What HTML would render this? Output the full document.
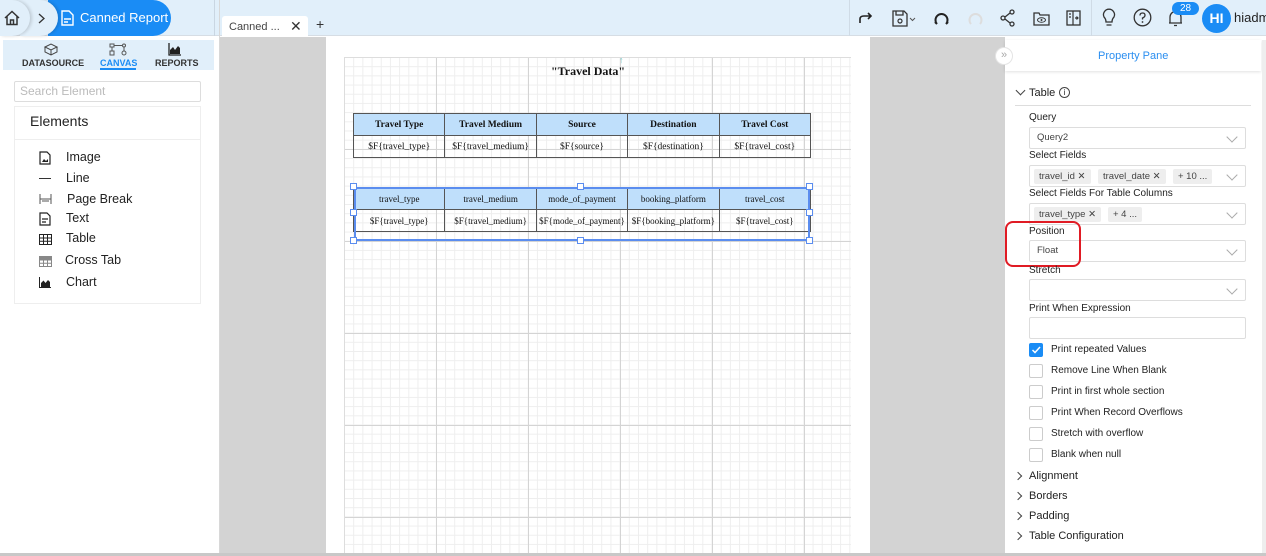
<!DOCTYPE html>
<html><head><meta charset="utf-8"><style>
*{margin:0;padding:0;box-sizing:border-box}
body{width:1266px;height:556px;overflow:hidden;background:#fff;font-family:"Liberation Sans",sans-serif;position:relative;color:#222}
.a{position:absolute}
.top{left:0;top:0;width:1266px;height:36px;background:#e1effa;border-bottom:1px solid #d6dde4}
svg{display:block}
.ser{font-family:"Liberation Serif",serif;font-size:9.5px;color:#111}
table{border-collapse:collapse;table-layout:fixed}
td{border:1px solid #555;text-align:center;height:22px;padding:0;overflow:hidden;white-space:nowrap}
tr.h td{background:#bfdffb}
.t1 tr.h td{font-weight:bold}
.t2 td{font-size:9px}
.lbl{font-size:10px;color:#222;left:1029px}
.box{left:1029px;width:217px;height:22px;border:1px solid #ddd;border-radius:2px;background:#fff}
.chev{position:absolute;right:9px;top:5px;width:8px;height:8px;border-right:1px solid #aaa;border-bottom:1px solid #aaa;transform:rotate(45deg)}
.chip{position:absolute;top:3px;height:15px;background:#eee;font-size:9.5px;color:#444;line-height:15px;padding:0 5px;border-radius:2px}
.cb{left:1029px;width:14px;height:14px;border:1px solid #ccc;border-radius:2px;background:#fff}
.cbl{left:1051px;font-size:10px;color:#222}
.sec{left:1029px;font-size:11px;color:#222}
.arr{position:absolute;left:1015px;width:6px;height:6px;border-right:1px solid #444;border-bottom:1px solid #444;transform:rotate(-45deg)}
.el{left:66px;font-size:12.5px;color:#222}
.ic{left:39px}
</style></head><body>
<div class="a top"></div>
<!-- breadcrumb -->
<div class="a" style="left:48px;top:0;width:123px;height:36px;background:#1a8cf5;border-radius:0 18px 18px 0;z-index:1"></div>
<div class="a" style="left:20px;top:0;width:38px;height:36px;background:#e1effa;border-radius:0 18px 18px 0;box-shadow:2px 0 3px rgba(0,0,0,.15);z-index:2"></div>
<div class="a" style="left:0;top:0;width:30px;height:36px;background:#e1effa;border-radius:0 18px 18px 0;box-shadow:2px 0 3px rgba(0,0,0,.15);z-index:3"></div>
<svg class="a" style="left:3px;top:9px;z-index:4" width="18" height="18" viewBox="0 0 18 18"><path d="M2 9 L9 2.5 L16 9 M4 7.5 V15.5 H14 V7.5 M7.5 15.5 V11 H10.5 V15.5" fill="none" stroke="#333" stroke-width="1.5"/></svg>
<svg class="a" style="left:38px;top:13px;z-index:4" width="8" height="11" viewBox="0 0 8 11"><path d="M1 1 L6 5.5 L1 10" fill="none" stroke="#333" stroke-width="1.3"/></svg>
<svg class="a" style="left:61px;top:10px;z-index:3" width="13" height="16" viewBox="0 0 13 16"><path d="M1 1 H8 L12 5 V15 H1 Z M3 9 H10 M3 12 H7" fill="none" stroke="#fff" stroke-width="1.4"/></svg>
<div class="a" style="left:80px;top:10px;font-size:13px;color:#fff;z-index:3">Canned Report</div>
<div class="a" style="left:214px;top:0;width:1px;height:36px;background:#c9d6e2"></div>
<div class="a" style="left:219px;top:0;width:1px;height:556px;background:#d8d8d8"></div>
<!-- tab -->
<div class="a" style="left:222px;top:16px;width:86px;height:20px;background:#fff;border-radius:3px 3px 0 0"></div>
<div class="a" style="left:229px;top:21px;font-size:11px;color:#444">Canned ...</div>
<div class="a" style="left:290px;top:18px;font-size:14px;color:#333">✕</div>
<div class="a" style="left:316px;top:16px;font-size:14px;color:#333">+</div>
<!-- toolbar -->
<div class="a" style="left:849px;top:0;width:1px;height:36px;background:#cfdbe6"></div>
<div class="a" style="left:1091px;top:0;width:1px;height:36px;background:#cfdbe6"></div>
<svg class="a" style="left:858px;top:10px" width="16" height="16" viewBox="0 0 16 16"><path d="M2 13 V9 Q2 6 6 6 H13 M10 3 L13 6 L10 9" fill="none" stroke="#222" stroke-width="1.6"/></svg>
<svg class="a" style="left:892px;top:10px" width="26" height="17" viewBox="0 0 26 17"><path d="M1 1 H12 L15 4 V16 H1 Z M4 1 V5 H11 V1" fill="none" stroke="#333" stroke-width="1.3"/><circle cx="8" cy="11" r="2" fill="none" stroke="#333" stroke-width="1.2"/><path d="M18 8 L20.5 10.5 L23 8" fill="none" stroke="#555"/></svg>
<svg class="a" style="left:933px;top:10px" width="17" height="17" viewBox="0 0 17 17"><path d="M4 14 A6 6 0 1 1 13 14 M4 14 L2 12 M13 14 L15 12" fill="none" stroke="#222" stroke-width="2"/></svg>
<svg class="a" style="left:967px;top:10px" width="17" height="17" viewBox="0 0 17 17"><path d="M4 14 A6 6 0 1 1 13 14" fill="none" stroke="#ddd" stroke-width="2"/></svg>
<svg class="a" style="left:1000px;top:9px" width="16" height="18" viewBox="0 0 16 18"><circle cx="12" cy="3" r="2" fill="none" stroke="#333" stroke-width="1.3"/><circle cx="3" cy="9" r="2" fill="none" stroke="#333" stroke-width="1.3"/><circle cx="12" cy="15" r="2" fill="none" stroke="#333" stroke-width="1.3"/><path d="M5 8 L10 4 M5 10 L10 14" stroke="#333" stroke-width="1.3"/></svg>
<svg class="a" style="left:1033px;top:11px" width="17" height="15" viewBox="0 0 17 15"><path d="M1 2 H6 L7 4 H16 V14 H1 Z" fill="none" stroke="#333" stroke-width="1.3"/><ellipse cx="8.5" cy="9" rx="4" ry="2.3" fill="none" stroke="#333"/><circle cx="8.5" cy="9" r="1" fill="#333"/></svg>
<svg class="a" style="left:1066px;top:10px" width="15" height="16" viewBox="0 0 15 16"><rect x="1" y="1" width="13" height="14" fill="none" stroke="#333" stroke-width="1.3"/><path d="M7 1 V15 M3 4 H5 M3 7 H5 M9 8 L12 8 M10.5 6.5 L12 8 L10.5 9.5" stroke="#333" stroke-width="1.2" fill="none"/></svg>
<svg class="a" style="left:1101px;top:8px" width="16" height="20" viewBox="0 0 16 20"><path d="M5 14 Q5 11 3 9 A5.5 5.5 0 1 1 13 9 Q11 11 11 14 Z M5.5 17 H10.5" fill="none" stroke="#333" stroke-width="1.3"/></svg>
<svg class="a" style="left:1133px;top:8px" width="19" height="19" viewBox="0 0 19 19"><circle cx="9.5" cy="9.5" r="8.3" fill="none" stroke="#333" stroke-width="1.3"/><path d="M7 7.5 Q7 5 9.5 5 Q12 5 12 7.3 Q12 9 9.5 10 V11.5" fill="none" stroke="#333" stroke-width="1.3"/><circle cx="9.5" cy="14" r=".9" fill="#333"/></svg>
<svg class="a" style="left:1168px;top:10px" width="15" height="17" viewBox="0 0 15 17"><path d="M2 13 V7 A5.5 5.5 0 0 1 13 7 V13 H2 M1 13 H14 M6 15.5 H9" fill="none" stroke="#333" stroke-width="1.3"/></svg>
<div class="a" style="left:1172px;top:2px;width:27px;height:13px;background:#1a8cf5;border-radius:7px;color:#fff;font-size:10px;text-align:center;line-height:13px">28</div>
<div class="a" style="left:1202px;top:4px;width:29px;height:29px;background:#1a8cf5;border-radius:50%;color:#fff;font-size:14px;font-weight:bold;text-align:center;line-height:29px">HI</div>
<div class="a" style="left:1234px;top:10px;font-size:13px;color:#222">hiadm</div>
<!-- left panel -->
<div class="a" style="left:3px;top:40px;width:211px;height:30px;background:#e1effa"></div>
<svg class="a" style="left:43px;top:43px" width="16" height="13" viewBox="0 0 16 13"><path d="M2 4 L8 1 L14 4 L8 7 Z M2 4 V9 L8 12 L14 9 V4 M8 7 V12" fill="none" stroke="#444" stroke-width="1"/></svg>
<div class="a" style="left:22px;top:58px;font-size:9px;font-weight:bold;color:#333">DATASOURCE</div>
<svg class="a" style="left:109px;top:43px" width="18" height="13" viewBox="0 0 18 13"><rect x="1" y="1" width="4" height="3" fill="none" stroke="#555"/><rect x="1" y="8" width="4" height="4" fill="none" stroke="#555"/><circle cx="15" cy="2.5" r="1.5" fill="none" stroke="#555"/><circle cx="15" cy="10" r="2" fill="none" stroke="#555"/><path d="M5 2.5 H13 M3 4 V8 M15 4 V8" stroke="#555"/></svg>
<div class="a" style="left:100px;top:58px;font-size:9px;font-weight:bold;color:#1a8cf5">CANVAS</div>
<div class="a" style="left:100px;top:68px;width:36px;height:2px;background:#1a8cf5"></div>
<svg class="a" style="left:168px;top:43px" width="13" height="13" viewBox="0 0 13 13"><path d="M1 0 V12 H13" stroke="#222" fill="none" stroke-width="1.3"/><path d="M2 11 V7 L5 4 L7 7 L10 3 L12 5 V11 Z" fill="#222"/></svg>
<div class="a" style="left:155px;top:58px;font-size:9px;font-weight:bold;color:#333">REPORTS</div>
<div class="a" style="left:14px;top:81px;width:187px;height:21px;border:1px solid #ddd;border-radius:2px"></div>
<div class="a" style="left:20px;top:84px;font-size:12px;color:#bbb">Search Element</div>
<div class="a" style="left:14px;top:106px;width:187px;height:198px;border:1px solid #eee"></div>
<div class="a" style="left:14px;top:139px;width:187px;height:1px;background:#eee"></div>
<div class="a" style="left:30px;top:113px;font-size:14px;color:#222">Elements</div>
<svg class="a ic" style="top:151px" width="12" height="14" viewBox="0 0 12 14"><path d="M1 1 H8 L11 4 V13 H1 Z" fill="none" stroke="#222" stroke-width="1.2"/><path d="M3 11 L5 8 L7 10 L9 8 V11 Z" fill="#222"/></svg>
<div class="a el" style="top:150px">Image</div>
<div class="a ic" style="top:178px;width:12px;height:1px;background:#333"></div>
<div class="a el" style="top:171px">Line</div>
<svg class="a ic" style="top:193px" width="13" height="12" viewBox="0 0 13 12"><path d="M1 1 V11 M12 1 V11 M1 6 H12 M3 8 H10" stroke="#555" fill="none"/></svg>
<div class="a el" style="top:192px;left:67px">Page Break</div>
<svg class="a ic" style="top:212px" width="12" height="14" viewBox="0 0 12 14"><path d="M1 1 H8 L11 4 V13 H1 Z M3 7 H9 M3 10 H7" fill="none" stroke="#222" stroke-width="1.2"/></svg>
<div class="a el" style="top:211px">Text</div>
<svg class="a ic" style="top:234px" width="13" height="11" viewBox="0 0 13 11"><path d="M.5 .5 H12.5 V10.5 H.5 Z M.5 4 H12.5 M.5 7.3 H12.5 M4.5 .5 V10.5 M8.5 .5 V10.5" stroke="#222" fill="none"/></svg>
<div class="a el" style="top:231px">Table</div>
<svg class="a ic" style="top:256px" width="13" height="11" viewBox="0 0 13 11"><path d="M.5 .5 H12.5 V10.5 H.5 Z M.5 4 H12.5 M.5 7.3 H12.5 M4.5 .5 V10.5 M8.5 .5 V10.5" stroke="#888" fill="none"/><rect x="0" y="0" width="13" height="3.5" fill="#888"/></svg>
<div class="a el" style="top:253px;left:65px">Cross Tab</div>
<svg class="a ic" style="top:277px" width="12" height="11" viewBox="0 0 12 11"><path d="M.5 0 V10.5 H12" stroke="#222" fill="none"/><path d="M2 10 V6 L4.5 3.5 L6.5 6 L9 3 L11 5 V10 Z" fill="#222"/></svg>
<div class="a el" style="top:275px">Chart</div>
<!-- canvas -->
<div class="a" style="left:220px;top:37px;width:785px;height:519px;background:#d3d3d3"></div>
<div class="a" style="left:326px;top:37px;width:544px;height:519px;background:#fff"></div>
<div class="a" style="left:344px;top:57px;width:507px;height:496px;border-left:1px solid #ddd;border-top:1px solid #ddd;
background-image:linear-gradient(to right,#d4d4d4 1px,transparent 1px),linear-gradient(to bottom,#d4d4d4 1px,transparent 1px),linear-gradient(to right,#eee 1px,transparent 1px),linear-gradient(to bottom,#eee 1px,transparent 1px);
background-size:92px 92px,92px 92px,9.2px 9.2px,9.2px 9.2px;background-position:-1px -1px"></div>
<div class="a" style="left:0;top:553px;width:1266px;height:3px;background:#c8c8c8"></div>
<div class="a ser" style="left:551px;top:64px;font-size:12px;font-weight:bold">"Travel Data"</div>
<div class="a" style="left:619px;top:55px;font-size:9px;color:#7cc;">↑</div>
<table class="a ser t1" style="left:353px;top:113px;width:458px">
<tr class="h"><td>Travel Type</td><td>Travel Medium</td><td>Source</td><td>Destination</td><td>Travel Cost</td></tr>
<tr><td>$F{travel_type}</td><td>$F{travel_medium}</td><td>$F{source}</td><td>$F{destination}</td><td>$F{travel_cost}</td></tr>
</table>
<table class="a ser t2" style="left:353px;top:187px;width:458px">
<tr class="h"><td>travel_type</td><td>travel_medium</td><td>mode_of_payment</td><td>booking_platform</td><td>travel_cost</td></tr>
<tr><td>$F{travel_type}</td><td>$F{travel_medium}</td><td>$F{mode_of_payment}</td><td>$F{booking_platform}</td><td>$F{travel_cost}</td></tr>
</table>
<div class="a" style="left:354px;top:187px;width:456px;height:54px;border:2px solid #5b8def"></div>
<div class="a" style="left:350px;top:183px;width:7px;height:7px;border:1px solid #5b8def;background:#fff"></div>
<div class="a" style="left:577px;top:183px;width:7px;height:7px;border:1px solid #5b8def;background:#fff"></div>
<div class="a" style="left:806px;top:183px;width:7px;height:7px;border:1px solid #5b8def;background:#fff"></div>
<div class="a" style="left:350px;top:209px;width:7px;height:7px;border:1px solid #5b8def;background:#fff"></div>
<div class="a" style="left:806px;top:209px;width:7px;height:7px;border:1px solid #5b8def;background:#fff"></div>
<div class="a" style="left:350px;top:237px;width:7px;height:7px;border:1px solid #5b8def;background:#fff"></div>
<div class="a" style="left:577px;top:237px;width:7px;height:7px;border:1px solid #5b8def;background:#fff"></div>
<div class="a" style="left:806px;top:237px;width:7px;height:7px;border:1px solid #5b8def;background:#fff"></div>
<!-- property pane -->
<div class="a" style="left:1005px;top:40px;width:256px;height:513px;background:#fff"></div>
<div class="a" style="left:1005px;top:40px;width:256px;height:31px;background:#fff;box-shadow:0 1px 3px rgba(0,0,0,.12)"></div>
<div class="a" style="left:1262px;top:40px;width:4px;height:513px;background:#eee"></div>
<div class="a" style="left:995px;top:47px;width:18px;height:18px;border-radius:50%;background:#fff;border:1px solid #e4e4e4;font-size:11px;color:#aaa;text-align:center;line-height:15px">»</div>
<div class="a" style="left:1098px;top:50px;font-size:11px;color:#2a8ef0">Property Pane</div>
<div class="a" style="left:1017px;top:87px;width:7px;height:7px;border-right:1px solid #444;border-bottom:1px solid #444;transform:rotate(45deg)"></div>
<div class="a" style="left:1029px;top:87px;font-size:11px;color:#222">Table</div>
<div class="a" style="left:1059px;top:87px;width:11px;height:11px;border:1px solid #444;border-radius:50%;font-size:8px;text-align:center;line-height:9px">i</div>
<div class="a" style="left:1015px;top:105px;width:236px;height:1px;background:#ddd"></div>
<div class="a lbl" style="top:112px">Query</div>
<div class="a box" style="top:127px"><span style="position:absolute;left:7px;top:4px;font-size:9.5px;color:#444">Query2</span><i class="chev"></i></div>
<div class="a lbl" style="top:150px">Select Fields</div>
<div class="a box" style="top:165px"><span class="chip" style="left:4px">travel_id ✕</span><span class="chip" style="left:68px">travel_date ✕</span><span class="chip" style="left:143px">+ 10 ...</span><i class="chev"></i></div>
<div class="a lbl" style="top:188px">Select Fields For Table Columns</div>
<div class="a box" style="top:203px"><span class="chip" style="left:4px">travel_type ✕</span><span class="chip" style="left:78px">+ 4 ...</span><i class="chev"></i></div>
<div class="a lbl" style="top:226px">Position</div>
<div class="a box" style="top:240px"><span style="position:absolute;left:7px;top:4px;font-size:9.5px;color:#444">Float</span><i class="chev"></i></div>
<div class="a" style="left:1005px;top:221px;width:76px;height:46px;border:2px solid #e01b24;border-radius:8px"></div>
<div class="a lbl" style="top:265px">Stretch</div>
<div class="a box" style="top:279px"><i class="chev"></i></div>
<div class="a lbl" style="top:303px">Print When Expression</div>
<div class="a box" style="top:317px"></div>
<div class="a cb" style="top:343px;background:#1a8cf5;border-color:#1a8cf5"><svg width="12" height="12" viewBox="0 0 12 12"><path d="M2.5 6 L5 8.5 L10 3" stroke="#fff" stroke-width="1.5" fill="none"/></svg></div>
<div class="a cbl" style="top:344px">Print repeated Values</div>
<div class="a cb" style="top:364px"></div><div class="a cbl" style="top:365px">Remove Line When Blank</div>
<div class="a cb" style="top:385px"></div><div class="a cbl" style="top:386px">Print in first whole section</div>
<div class="a cb" style="top:406px"></div><div class="a cbl" style="top:407px">Print When Record Overflows</div>
<div class="a cb" style="top:427px"></div><div class="a cbl" style="top:428px">Stretch with overflow</div>
<div class="a cb" style="top:448px"></div><div class="a cbl" style="top:449px">Blank when null</div>
<i class="arr" style="top:473px"></i><div class="a sec" style="top:470px">Alignment</div>
<i class="arr" style="top:493px"></i><div class="a sec" style="top:490px">Borders</div>
<i class="arr" style="top:513px"></i><div class="a sec" style="top:510px">Padding</div>
<i class="arr" style="top:533px"></i><div class="a sec" style="top:530px">Table Configuration</div>
</body></html>
